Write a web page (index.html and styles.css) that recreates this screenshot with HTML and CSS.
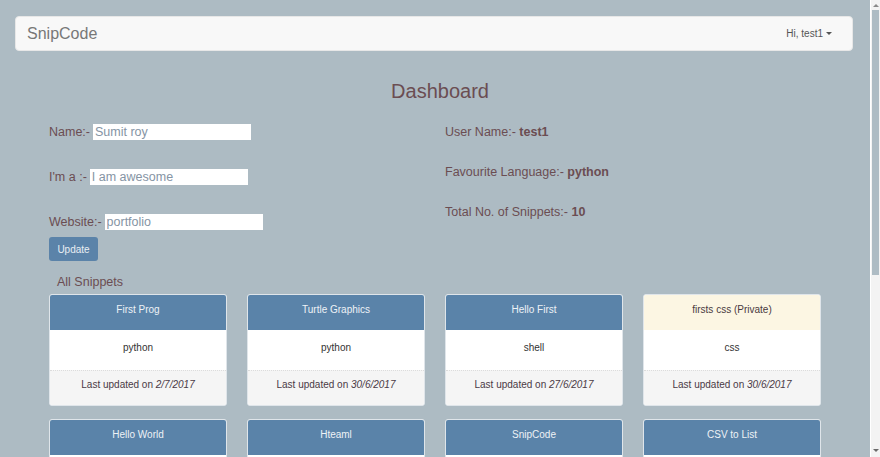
FILE: index.html
```html
<!DOCTYPE html>
<html>
<head>
<meta charset="utf-8">
<link rel="stylesheet" href="styles.css">
</head>
<body>
<nav class="navbar">
  <span class="brand">SnipCode</span>
  <span class="user">Hi, test1 <span class="caret"></span></span>
</nav>
<main class="page">
  <h1 class="title">Dashboard</h1>
  <section class="profile">
    <form class="profile-form">
      <label class="field">Name:- <input class="inp" type="text" value="Sumit roy"></label>
      <label class="field">I'm a :- <input class="inp" type="text" value="I am awesome"></label>
      <label class="field">Website:- <input class="inp" type="text" value="portfolio"></label>
      <button class="btn" type="button">Update</button>
    </form>
    <div class="profile-info">
      <p class="info">User Name:- <b>test1</b></p>
      <p class="info">Favourite Language:- <b>python</b></p>
      <p class="info">Total No. of Snippets:- <b>10</b></p>
    </div>
  </section>
  <h2 class="section-title">All Snippets</h2>
  <section class="cards">
    <div class="card"><div class="card-h">First Prog</div><div class="card-b">python</div><div class="card-f">Last updated on <i>2/7/2017</i></div></div>
    <div class="card"><div class="card-h">Turtle Graphics</div><div class="card-b">python</div><div class="card-f">Last updated on <i>30/6/2017</i></div></div>
    <div class="card"><div class="card-h">Hello First</div><div class="card-b">shell</div><div class="card-f">Last updated on <i>27/6/2017</i></div></div>
    <div class="card"><div class="card-h private">firsts css (Private)</div><div class="card-b">css</div><div class="card-f">Last updated on <i>30/6/2017</i></div></div>
    <div class="card"><div class="card-h">Hello World</div><div class="card-b"></div></div>
    <div class="card"><div class="card-h">Hteaml</div><div class="card-b"></div></div>
    <div class="card"><div class="card-h">SnipCode</div><div class="card-b"></div></div>
    <div class="card"><div class="card-h">CSV to List</div><div class="card-b"></div></div>
  </section>
</main>
<div class="scrollbar"><span class="arrow up"></span><span class="thumb"></span><span class="arrow down"></span></div>
</body>
</html>
```
FILE: styles.css
```css
html { background: #adbbc3; }

body {
  margin: 0 9px 0 0;
  padding: 16px 0 0;
  height: 441px;
  overflow: hidden;
  background: #adbbc3;
  font-family: "Liberation Sans", Arial, sans-serif;
  color: #6b4d52;
}

.navbar {
  margin: 0 18px 0 15px;
  height: 33px;
  background: #f8f8f8;
  border: 1px solid #e7e7e7;
  border-radius: 4px;
  display: flex;
  align-items: center;
  justify-content: space-between;
  padding: 0 20px 0 11px;
}
.brand { font-size: 16px; color: #777; }
.user { font-size: 10px; color: #555; display: flex; align-items: center; gap: 3px; }
.caret {
  width: 0; height: 0;
  border-left: 3px solid transparent;
  border-right: 3px solid transparent;
  border-top: 3px solid #555;
}

.page { padding: 0 40px 0 49px; }

.title {
  margin: 28px 0 0;
  text-align: center;
  font-size: 20px;
  font-weight: normal;
  line-height: 24px;
  color: #6b4d52;
}

.profile {
  display: grid;
  grid-template-columns: 396px 1fr;
  margin-top: 21px;
}
.profile-form { display: flex; flex-direction: column; align-items: flex-start; }
.field {
  font-size: 12.5px;
  line-height: 16px;
  display: flex;
  align-items: center;
  gap: 3px;
  margin-bottom: 29px;
}
.field:nth-child(3) { margin-bottom: 7px; }
.inp {
  width: 158px;
  height: 16px;
  box-sizing: border-box;
  border: none;
  padding: 0 2px;
  margin: 0;
  background: #fff;
  font-family: "Liberation Sans", Arial, sans-serif;
  font-size: 12.5px;
  color: #8594a4;
}
.btn {
  width: 49px;
  height: 24px;
  border: none;
  border-radius: 3px;
  background: #5b83a9;
  color: #e9eef3;
  font-family: "Liberation Sans", Arial, sans-serif;
  font-size: 10px;
  padding: 0;
}
.info {
  margin: 0 0 24px;
  font-size: 12.5px;
  line-height: 16px;
}

.section-title {
  margin: 13px 0 4px 8px;
  font-size: 12.5px;
  font-weight: normal;
  line-height: 16px;
}

.cards {
  display: grid;
  grid-template-columns: repeat(4, 178px);
  column-gap: 20px;
  row-gap: 13px;
}
.card {
  border: 1px solid #dfe5ea;
  border-radius: 3px;
  overflow: hidden;
  background: #fff;
  font-size: 10px;
  text-align: center;
}
.card-h {
  height: 35px;
  line-height: 29px;
  background: #5a83a9;
  color: #eef2f6;
}
.card-h.private { background: #fcf6e3; color: #4a3a3f; }
.card-b {
  height: 40px;
  line-height: 35px;
  color: #333;
}
.card-f {
  height: 34px;
  line-height: 27px;
  background: #f5f5f5;
  border-top: 1px dotted #dcdcdc;
  color: #4a3a45;
}

.scrollbar {
  position: fixed;
  top: 0;
  right: 0;
  width: 9px;
  height: 457px;
  background: #f3f3f3;
  border-left: 1px solid #fff;
  display: flex;
  flex-direction: column;
  align-items: center;
}
.thumb {
  width: 7px;
  height: 265px;
  margin-top: 1px;
  background: #aebcc4;
}
.arrow {
  width: 0; height: 0;
  border-left: 3px solid transparent;
  border-right: 3px solid transparent;
}
.arrow.up { border-bottom: 3px solid #8a8a8a; margin-top: 4px; margin-bottom: 2px; }
.arrow.down { border-top: 3px solid #6a6a6a; margin-top: auto; margin-bottom: 5px; }
```
